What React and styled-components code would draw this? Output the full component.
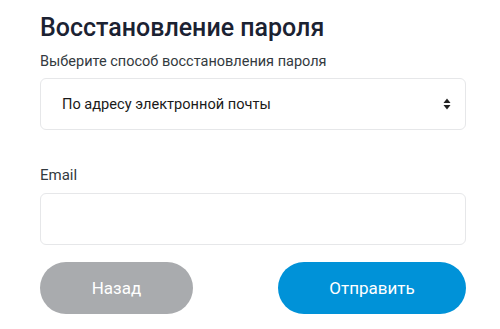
import React from 'react'
import styled, {createGlobalStyle} from 'styled-components'

const GlobalStyle = createGlobalStyle`
  body {
    margin: 0;
    background: #fff;
    font-family: Roboto, "Liberation Sans", sans-serif;
  }
`

const Wrapper = styled.section`
  width: 426px;
  padding: 12px 0 0 40px;
  display: flex;
  flex-direction: column;
`

const Title = styled.h2`
  margin: 0;
  font-size: 25px;
  line-height: 32px;
  font-weight: 500;
  color: #1b2232;
`

const Label = styled.label`
  display: block;
  font-size: ${props => props.size || 14.5}px;
  line-height: 20px;
  color: #333a40;
  margin: ${props => props.top || 0}px 0 ${props => props.bottom || 8}px;
`

const SelectBox = styled.div`
  height: 52px;
  box-sizing: border-box;
  border: 1px solid #e6e7e9;
  border-radius: 6px;
  display: flex;
  align-items: center;
  padding: 0 14px 0 21px;
  font-size: 14.6px;
  color: #1a1a1a;
  justify-content: space-between;
`

const Arrows = styled.svg`
  width: 8px;
  height: 12px;
`

const Input = styled.input`
  display: block;
  height: 52px;
  width: 100%;
  box-sizing: border-box;
  border: 1px solid #e6e7e9;
  border-radius: 6px;
  padding: 0 21px;
  font-size: 15px;
  outline: none;
`

const Buttons = styled.div`
  display: flex;
  justify-content: space-between;
  margin-top: 17px;
`

const Button = styled.button`
  width: ${props => props.width}px;
  height: 52px;
  border: none;
  border-radius: 26px;
  background: ${props => props.primary ? '#0092d8' : '#a9abae'};
  color: #fff;
  font-family: inherit;
  font-size: 17px;
  cursor: pointer;
`

export default function App() {
  return (
    <>
      <GlobalStyle/>
      <Wrapper>
        <Title>Восстановление пароля</Title>
        <Label top={8} bottom={6}>Выберите способ восстановления пароля</Label>
        <SelectBox>
          <span>По адресу электронной почты</span>
          <Arrows viewBox="0 0 8 12">
            <path d="M4 0.5L7.5 5H0.5Z" fill="#222"/>
            <path d="M4 11.5L7.5 7H0.5Z" fill="#222"/>
          </Arrows>
        </SelectBox>
        <Label size={15} top={35}>Email</Label>
        <Input type="email"/>
        <Buttons>
          <Button width={153}>Назад</Button>
          <Button width={188} primary>Отправить</Button>
        </Buttons>
      </Wrapper>
    </>
  )
}
